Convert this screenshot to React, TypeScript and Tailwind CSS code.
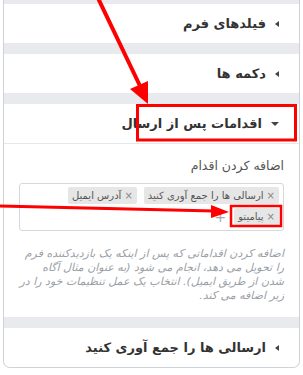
import React from "react";

const font = { fontFamily: '"DejaVu Sans", sans-serif' };

function TriLeft() {
  return (
    <span className="inline-block w-0 h-0 border-y-[3.5px] border-y-transparent border-r-[4px] border-r-[#444]" />
  );
}
function TriDown() {
  return (
    <span className="inline-block w-0 h-0 border-x-[4px] border-x-transparent border-t-[4px] border-t-[#444]" />
  );
}

function Header({ title, open }: { title: string; open?: boolean }) {
  return (
    <div className="h-[39px] flex items-center gap-[9px] pr-[20px] text-[13px] font-bold text-[#333]">
      {open ? <TriDown /> : <TriLeft />}
      <span>{title}</span>
    </div>
  );
}

function Tag({ label }: { label: string }) {
  return (
    <span className="h-[17px] flex items-center gap-[3px] px-[4px] bg-[#e6e6e6] text-[#555] text-[10px] rounded-[2px]">
      <span className="text-[#888] text-[10px]">×</span>
      <span>{label}</span>
    </span>
  );
}

export default function App() {
  return (
    <div dir="rtl" style={font} className="relative w-[303px] h-[375px] bg-white overflow-hidden">
      <div className="mx-[3px] w-[297px] bg-[#e8eaed] border-x border-b border-[#cfd2d6] rounded-b-[7px] pt-[4px] flex flex-col gap-[11px] overflow-hidden">
        <div className="bg-white">
          <Header title="فیلدهای فرم" />
        </div>
        <div className="bg-white">
          <Header title="دکمه ها" />
        </div>
        <div className="bg-white">
          <Header title="اقدامات پس از ارسال" open />
          <div className="border-t border-[#e6e7e9] px-[15px] pt-[13px] pb-[14px]">
            <div className="text-[12.5px] text-[#555] leading-[18px]">اضافه کردن اقدام</div>
            <div className="mt-[8px] h-[48px] border border-[#d5d7da] rounded-[3px] px-[4px] pt-[3px] flex flex-col gap-[4px]">
              <div className="flex gap-[7px]">
                <Tag label="ارسالی ها را جمع آوری کنید" />
                <Tag label="آدرس ایمیل" />
              </div>
              <div className="flex items-center gap-[8px]">
                <Tag label="پیامیتو" />
                <span className="text-[#aaa] text-[14px] leading-none">+</span>
              </div>
            </div>
            <p className="mt-[16px] text-[11px] leading-[14px] italic text-[#9aa0a6] whitespace-nowrap">
              اضافه کردن اقداماتی که پس از اینکه یک بازدیدکننده فرم
              <br />
              را تحویل می دهد، انجام می شود (به عنوان مثال آگاه
              <br />
              شدن از طریق ایمیل). انتخاب یک عمل تنظیمات خود را در
              <br />
              زیر اضافه می کند.
            </p>
          </div>
        </div>
        <div className="bg-white">
          <Header title="ارسالی ها را جمع آوری کنید" />
        </div>
      </div>

      <svg className="absolute inset-0 pointer-events-none" width="303" height="375" viewBox="0 0 303 375">
        <line x1="97" y1="-4" x2="141" y2="88" stroke="#ff0000" strokeWidth="4" />
        <polygon points="148,104 130,89 148,81" fill="#ff0000" />
        <rect x="137.5" y="105.5" width="158" height="34.5" fill="none" stroke="#ff0000" strokeWidth="3" />
        <line x1="-2" y1="206" x2="214" y2="211" stroke="#ff0000" strokeWidth="3" />
        <polygon points="229,212 211,205 211,218" fill="#ff0000" />
        <rect x="231" y="206" width="50" height="20" fill="none" stroke="#ff0000" strokeWidth="2.5" />
      </svg>
    </div>
  );
}
